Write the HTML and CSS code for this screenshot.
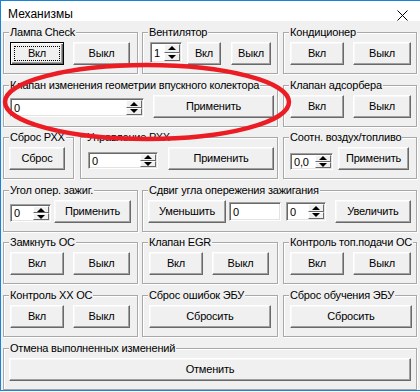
FILE: index.html
```html
<!DOCTYPE html>
<html>
<head>
<meta charset="utf-8">
<link rel="stylesheet" href="styles.css">
</head>
<body>
<div class="window">
  <div class="titlebar">
    <span class="title">Механизмы</span>
    <svg class="close" width="11" height="11" viewBox="0 0 11 11"><path d="M0.5 0.5 L10.5 10.5 M10.5 0.5 L0.5 10.5" stroke="#000" stroke-width="1"/></svg>
  </div>
  <div class="content">
    <div class="row">
      <div class="group ga"><span class="legend">Лампа Check</span>
        <div class="btn focus w54">Вкл</div><div class="btn w57 ml9">Выкл</div></div>
      <div class="group gb"><span class="legend">Вентилятор</span>
        <div class="edit spinedit e-fan">1<span class="spin"><span class="arr up"></span><span class="arr down"></span></span></div>
        <div class="btn w34 ml5">Вкл</div><div class="btn w40 ml10">Выкл</div></div>
      <div class="group gc"><span class="legend">Кондиционер</span>
        <div class="btn w54">Вкл</div><div class="btn w58 ml9">Выкл</div></div>
    </div>
    <div class="row g11">
      <div class="group gab"><span class="legend">Клапан изменения геометрии впускного колектора</span>
        <div class="edit spinedit e-geo">0<span class="spin"><span class="arr up"></span><span class="arr down"></span></span></div>
        <div class="btn w121 ml9">Применить</div></div>
      <div class="group gc"><span class="legend">Клапан адсорбера</span>
        <div class="btn w54">Вкл</div><div class="btn w58 ml9">Выкл</div></div>
    </div>
    <div class="row">
      <div class="group g-rxx"><span class="legend">Сброс РХХ</span>
        <div class="btn w56">Сброс</div></div>
      <div class="group g-upr"><span class="legend">Управление РХХ</span>
        <div class="edit spinedit e-upr">0<span class="spin"><span class="arr up"></span><span class="arr down"></span></span></div>
        <div class="btn w106 ml10">Применить</div></div>
      <div class="group gc"><span class="legend">Соотн. воздух/топливо</span>
        <div class="edit spinedit e-air">0,0<span class="spin"><span class="arr up"></span><span class="arr down"></span></span></div>
        <div class="btn w71 ml5">Применить</div></div>
    </div>
    <div class="row g11">
      <div class="group ga"><span class="legend">Угол опер. зажиг.</span>
        <div class="edit spinedit e-ang">0<span class="spin"><span class="arr up"></span><span class="arr down"></span></span></div>
        <div class="btn w77 ml3">Применить</div></div>
      <div class="group gbc"><span class="legend">Сдвиг угла опережения зажигания</span>
        <div class="btn w78">Уменьшить</div>
        <div class="edit e-shift">0</div>
        <div class="edit spinedit e-shs">0<span class="spin"><span class="arr up"></span><span class="arr down"></span></span></div>
        <div class="btn w76 ml9">Увеличить</div></div>
    </div>
    <div class="row">
      <div class="group ga"><span class="legend">Замкнуть ОС</span>
        <div class="btn w54">Вкл</div><div class="btn w57 ml9">Выкл</div></div>
      <div class="group gb"><span class="legend">Клапан EGR</span>
        <div class="btn w54">Вкл</div><div class="btn w57 ml9">Выкл</div></div>
      <div class="group gc"><span class="legend">Контроль топ.подачи ОС</span>
        <div class="btn w54">Вкл</div><div class="btn w58 ml9">Выкл</div></div>
    </div>
    <div class="row g11">
      <div class="group ga"><span class="legend">Контроль ХХ ОС</span>
        <div class="btn w54">Вкл</div><div class="btn w57 ml9">Выкл</div></div>
      <div class="group gb"><span class="legend">Сброс ошибок ЭБУ</span>
        <div class="btn w122">Сбросить</div></div>
      <div class="group gc"><span class="legend">Сброс обучения ЭБУ</span>
        <div class="btn w122">Сбросить</div></div>
    </div>
    <div class="row g11">
      <div class="group gfull"><span class="legend">Отмена выполненных изменений</span>
        <div class="btn w402">Отменить</div></div>
    </div>
  </div>
  <svg class="annot" width="420" height="392" viewBox="0 0 420 392">
    <ellipse cx="147" cy="102" rx="142" ry="37" fill="none" stroke="#ec1c24" stroke-width="4.5"/>
  </svg>
</div>
</body>
</html>
```

FILE: styles.css
```css
html, body {
  margin: 0;
  padding: 0;
  background: #ffffff;
}

.window {
  position: relative;
  width: 420px;
  height: 391px;
  box-sizing: border-box;
  border: 1px solid #1883d7;
  border-right: none;
  background: #f0f0f0;
  overflow: hidden;
  font: 11px "Liberation Sans", Arial, sans-serif;
  letter-spacing: -0.2px;
  color: #000;
}

.titlebar {
  height: 20px;
  background: #ffffff;
  display: flex;
  align-items: center;
  padding-left: 7px;
}

.title {
  font: 12px "Liberation Sans", Arial, sans-serif;
  letter-spacing: 0;
  margin-top: 6px;
}

.close {
  margin-left: auto;
  margin-right: 12px;
  margin-top: 8px;
}

.content {
  padding: 11px 3px 0 2px;
}

.row {
  display: flex;
  margin-top: 10px;
}

.row:first-child {
  margin-top: 0;
}

.row.g11 {
  margin-top: 11px;
}

.group {
  position: relative;
  height: 42px;
  box-sizing: border-box;
  border: 1px solid #a8a8a8;
  box-shadow: inset 1px 1px 0 #fff, 1px 1px 0 #fff;
  display: flex;
  align-items: flex-start;
  padding: 9px 0 0 6px;
}

.ga { width: 135px; }
.gb { width: 136px; margin-left: 4px; }
.gc { width: 134px; margin-left: 5px; }
.gab { width: 275px; }
.gbc { width: 275px; margin-left: 4px; }
.g-rxx { width: 71px; padding-left: 5px; }
.g-upr { width: 198px; margin-left: 6px; }
.gfull { width: 414px; padding-left: 5px; }
.gbc { padding-left: 5px; }

.legend {
  position: absolute;
  top: -7px;
  left: 5px;
  padding: 0 1px;
  line-height: 13px;
  background: #f0f0f0;
  white-space: nowrap;
}

.btn {
  position: relative;
  box-sizing: border-box;
  height: 23px;
  background: #f0f0f0;
  border: 1px solid;
  border-color: #ffffff #696969 #696969 #ffffff;
  box-shadow: inset -1px -1px 0 #a0a0a0, inset 1px 1px 0 #f8f8f8;
  display: flex;
  align-items: center;
  justify-content: center;
  padding-bottom: 1px;
}

.btn.focus {
  border-color: #000;
  box-shadow: inset 1px 1px 0 #fff, inset -1px -1px 0 #696969, inset -2px -2px 0 #a0a0a0;
}

.btn.focus::after {
  content: "";
  position: absolute;
  left: 3px;
  top: 3px;
  right: 3px;
  bottom: 3px;
  border: 1px dotted #000;
}

.w34 { width: 34px; }
.w40 { width: 40px; }
.w54 { width: 54px; }
.w56 { width: 56px; }
.w57 { width: 57px; }
.w58 { width: 58px; }
.w71 { width: 71px; }
.w76 { width: 76px; }
.w77 { width: 77px; }
.w78 { width: 78px; }
.w106 { width: 106px; }
.w121 { width: 121px; }
.w122 { width: 122px; }
.w402 { width: 402px; }

.ml3 { margin-left: 3px; }
.ml5 { margin-left: 5px; }
.ml9 { margin-left: 9px; }
.ml10 { margin-left: 10px; }

.edit {
  box-sizing: border-box;
  background: #ffffff;
  border: 1px solid;
  border-color: #a0a0a0 #ffffff #ffffff #a0a0a0;
  box-shadow: inset 1px 1px 0 #696969, inset -1px -1px 0 #e3e3e3;
  display: flex;
  align-items: center;
  padding: 0 0 0 3px;
}

.spinedit {
  padding-right: 1px;
}

.spin {
  margin-left: auto;
  width: 16px;
  align-self: stretch;
  display: flex;
  flex-direction: column;
  padding: 1px 0;
}

.arr {
  flex: 1;
  background: #f0f0f0;
  border: 1px solid;
  border-color: #ffffff #696969 #696969 #ffffff;
  display: flex;
  align-items: center;
  justify-content: center;
}

.arr::before {
  content: "";
  width: 0;
  height: 0;
  border-left: 4px solid transparent;
  border-right: 4px solid transparent;
}

.up::before {
  border-bottom: 4px solid #000;
}

.down::before {
  border-top: 4px solid #000;
}

.e-fan { width: 32px; height: 21px; margin-left: 1px; }
.e-geo { width: 134px; height: 19px; margin-top: 3px; }
.e-upr { width: 70px; height: 17px; margin-top: 5px; margin-left: 1px; }
.e-air { width: 43px; height: 17px; margin-top: 6px; }
.e-ang { width: 41px; height: 18px; margin-top: 4px; }
.e-shift { width: 52px; height: 19px; margin-top: 2px; margin-left: 3px; }
.e-shs { width: 40px; height: 19px; margin-top: 2px; margin-left: 5px; }

.annot {
  position: absolute;
  left: -1px;
  top: -1px;
  pointer-events: none;
}
```
